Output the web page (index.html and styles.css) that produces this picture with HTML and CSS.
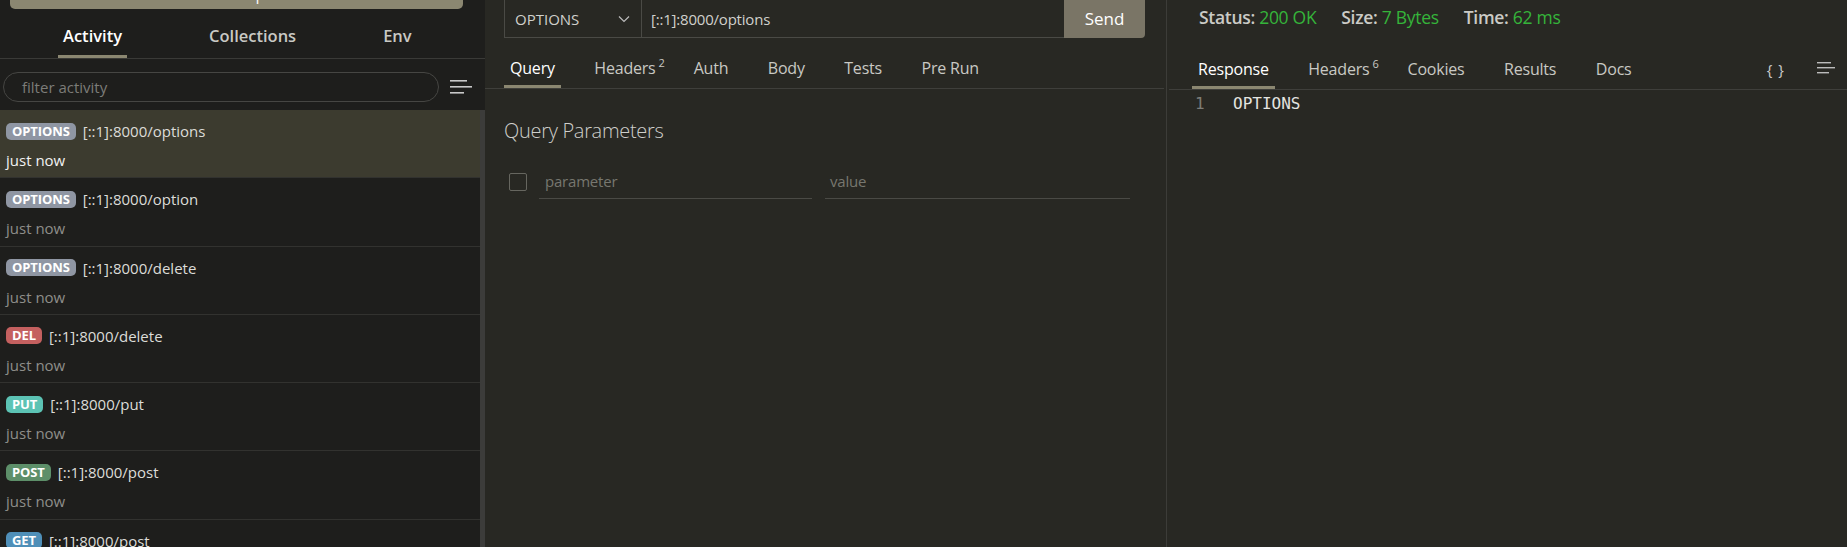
FILE: index.html
```html
<!DOCTYPE html>
<html>
<head>
<meta charset="utf-8">
<link rel="stylesheet" href="styles.css">
</head>
<body>
<div class="app">
  <aside class="sidebar">
    <div class="topbtn"><span>New Request</span></div>
    <nav class="stabs">
      <div class="stab active">Activity</div>
      <div class="stab">Collections</div>
      <div class="stab">Env</div>
    </nav>
    <div class="filter-row">
      <div class="filter">filter activity</div>
      <svg class="menu-icon" width="24" height="14" viewBox="0 0 24 14"><rect x="0" y="0" width="17" height="1.6" fill="#c8c8c8"/><rect x="0" y="6" width="22" height="1.6" fill="#c8c8c8"/><rect x="0" y="12" width="14" height="1.6" fill="#c8c8c8"/></svg>
    </div>
    <div class="list-wrap">
      <ul class="list">
        <li class="item selected"><div class="line"><span class="badge b-options">OPTIONS</span><span class="url">[::1]:8000/options</span></div><div class="when">just now</div></li>
        <li class="item"><div class="line"><span class="badge b-options">OPTIONS</span><span class="url">[::1]:8000/option</span></div><div class="when">just now</div></li>
        <li class="item"><div class="line"><span class="badge b-options">OPTIONS</span><span class="url">[::1]:8000/delete</span></div><div class="when">just now</div></li>
        <li class="item"><div class="line"><span class="badge b-del">DEL</span><span class="url">[::1]:8000/delete</span></div><div class="when">just now</div></li>
        <li class="item"><div class="line"><span class="badge b-put">PUT</span><span class="url">[::1]:8000/put</span></div><div class="when">just now</div></li>
        <li class="item"><div class="line"><span class="badge b-post">POST</span><span class="url">[::1]:8000/post</span></div><div class="when">just now</div></li>
        <li class="item"><div class="line"><span class="badge b-get">GET</span><span class="url">[::1]:8000/post</span></div><div class="when">just now</div></li>
      </ul>
      <div class="scrollbar"></div>
    </div>
  </aside>

  <main class="request">
    <div class="reqbar">
      <div class="method">OPTIONS
        <svg class="chev" width="12" height="8" viewBox="0 0 12 8"><path d="M1 1.5 L6 6.5 L11 1.5" fill="none" stroke="#bbb" stroke-width="1.2"/></svg>
      </div>
      <div class="urlbox">[::1]:8000/options</div>
      <button class="send">Send</button>
    </div>
    <nav class="tabs">
      <div class="tab active"><span>Query</span></div>
      <div class="tab t-sup"><span>Headers<sup>2</sup></span></div>
      <div class="tab"><span>Auth</span></div>
      <div class="tab"><span>Body</span></div>
      <div class="tab"><span>Tests</span></div>
      <div class="tab"><span>Pre Run</span></div>
    </nav>
    <h2 class="qp">Query Parameters</h2>
    <div class="param-row">
      <span class="check"></span>
      <div class="field f-param">parameter</div>
      <div class="field f-value">value</div>
    </div>
  </main>

  <div class="vdiv"></div>

  <section class="response">
    <div class="status">
      <span class="stat">Status: <b>200 OK</b></span>
      <span class="stat">Size: <b>7 Bytes</b></span>
      <span class="stat">Time: <b>62 ms</b></span>
    </div>
    <nav class="tabs rtabs">
      <div class="tab active"><span>Response</span></div>
      <div class="tab t-sup"><span>Headers<sup>6</sup></span></div>
      <div class="tab"><span>Cookies</span></div>
      <div class="tab"><span>Results</span></div>
      <div class="tab"><span>Docs</span></div>
      <div class="spacer"></div>
      <div class="braces">{ }</div>
      <svg class="rmenu" width="20" height="12" viewBox="0 0 20 12"><rect x="0" y="0" width="14" height="1.4" fill="#bbb"/><rect x="0" y="5" width="18" height="1.4" fill="#bbb"/><rect x="0" y="10" width="12" height="1.4" fill="#bbb"/></svg>
    </nav>
    <div class="code"><span class="ln">1</span><span class="src">OPTIONS</span></div>
  </section>
</div>
</body>
</html>
```
FILE: styles.css
```css
* { box-sizing: border-box; }
html, body { margin: 0; padding: 0; }
body {
  background: #282823;
  font-family: "Open Sans", "Noto Sans", sans-serif;
  color: #d4d4d4;
  width: 1847px;
  height: 547px;
  overflow: hidden;
}
.app { display: flex; height: 547px; }

/* sidebar */
.sidebar {
  width: 485px;
  flex: none;
  background: #1e1e1c;
  display: flex;
  flex-direction: column;
}
.topbtn {
  margin: 0 22px 0 10px;
  height: 9px;
  background: #8b8771;
  border-radius: 0 0 5px 5px;
  overflow: hidden;
  display: flex;
  justify-content: center;
  align-items: flex-end;
  flex: none;
}
.topbtn span {
  color: #fff;
  font-size: 15px;
  line-height: 15px;
  margin-bottom: 7.5px;
  padding-left: 14px;
}
.stabs {
  display: flex;
  height: 50px;
  padding-left: 58px;
  gap: 77px;
  border-bottom: 1px solid #3a3a37;
  flex: none;
}
.stab {
  display: flex;
  align-items: center;
  padding: 7px 5px 0;
  font-size: 16.5px;
  font-weight: 600;
  color: #c9c9c4;
  border-bottom: 3px solid transparent;
}
.stab.active { color: #fff; border-bottom-color: #8b8771; }

.filter-row {
  display: flex;
  align-items: center;
  padding: 13px 0 8px 3px;
  gap: 11px;
  flex: none;
}
.filter {
  width: 436px;
  height: 30px;
  border: 1px solid #464643;
  border-radius: 15px;
  padding-left: 18px;
  font-size: 15px;
  line-height: 28px;
  color: #7c7c78;
}
.menu-icon { flex: none; }

.list-wrap { flex: 1; display: flex; min-height: 0; }
.list { list-style: none; margin: 0; padding: 0; flex: 1; overflow: hidden; }
.scrollbar { width: 5px; background: #3c3c3a; }
.item {
  height: 68.3px;
  border-bottom: 1px solid #32322f;
  padding: 12px 6px 0;
}
.item.selected { background: #3c3b2f; }
.line { display: flex; align-items: center; gap: 7px; height: 18px; }
.badge {
  height: 17px;
  padding: 0 6px;
  border-radius: 5px;
  font-size: 13px;
  font-weight: 700;
  color: #fff;
  line-height: 17px;
  letter-spacing: -0.1px;
}
.b-options { background: #8f96a3; }
.b-del { background: #c4605f; }
.b-put { background: #5cc3b4; }
.b-post { background: #5d8f69; }
.b-get { background: #4f8fb8; }
.url { font-size: 15px; color: #dcdcd8; }
.when {
  margin-top: 10px;
  font-size: 15px;
  color: #8e8e8a;
}
.item.selected .when { color: #f2f2f2; }

/* request */
.request {
  width: 681px;
  flex: none;
  padding: 0 0 0 19px;
}
.reqbar {
  display: flex;
  height: 39px;
  margin-top: -1px;
  width: 641px;
}
.method {
  width: 138px;
  border: 1px solid #4a4a45;
  display: flex;
  align-items: center;
  justify-content: space-between;
  padding: 0 11px 0 10px;
  font-size: 15px;
  color: #d0d0cc;
}
.urlbox {
  flex: 1;
  border-bottom: 1px solid #4a4a45;
  border-top: 1px solid #4a4a45;
  display: flex;
  align-items: center;
  padding-left: 9px;
  font-size: 15px;
  color: #d0d0cc;
  letter-spacing: -0.2px;
}
.send {
  width: 81px;
  border: none;
  background: #7a7566;
  color: #fff;
  font-family: inherit;
  font-size: 17px;
  border-radius: 0 0 4px 0;
  padding: 0;
}
.tabs {
  display: flex;
  height: 51px;
  border-bottom: 1px solid #3f3f3b;
  margin-left: -19px;
  padding-left: 19px;
  margin-right: 2px;
}
.tab {
  display: flex;
  align-items: center;
  padding: 13px 6px 0;
  margin-right: 27.5px;
  font-size: 16px;
  color: #c9c9c4;
  border-bottom: 3px solid transparent;
  letter-spacing: -0.2px;
}
.tab span { display: block; }
.tab sup { font-size: 11px; margin-left: 3px; line-height: 0; position: relative; top: -1px; }
.tab.active { color: #fff; border-bottom-color: #8b8771; }
.tabs .t-sup { margin-right: 17px; }
.qp {
  margin: 28px 0 0;
  font-size: 20px;
  font-weight: 300;
  color: #cfcfcb;
  letter-spacing: -0.3px;
}
.param-row {
  display: flex;
  align-items: flex-start;
  margin-top: 27px;
}
.check {
  width: 18px;
  height: 18px;
  border: 1px solid #66665f;
  border-radius: 2px;
  margin-left: 5px;
  margin-right: 12px;
  margin-top: 2px;
}
.field {
  height: 28px;
  border-bottom: 1px solid #4a4a45;
  font-size: 15px;
  color: #77776f;
  padding: 0 0 0 6px;
  line-height: 20px;
  letter-spacing: -0.2px;
}
.f-param { width: 273px; margin-right: 13px; }
.f-value { width: 305px; padding-left: 5px; }

.vdiv { width: 1px; background: #3c3c38; flex: none; }

/* response */
.response { flex: 1; padding-left: 2px; }
.status {
  display: flex;
  gap: 25px;
  padding: 5px 0 0 30px;
  height: 39px;
  font-size: 17.5px;
}
.stat { color: #cbcbc6; font-weight: 600; letter-spacing: -0.3px; }
.stat b { color: #35b43a; font-weight: 500; }
.rtabs { margin-left: 0; padding-left: 23px; margin-right: 0; }
.spacer { flex: 1; }
.braces { font-size: 15px; color: #ccc; padding-top: 10px; display: flex; align-items: center; margin-right: 32px; letter-spacing: 1px; }
.rmenu { align-self: center; margin-top: 8px; margin-right: 10px; }
.code {
  display: flex;
  padding: 4px 0 0 26px;
  font-family: "DejaVu Sans Mono", "Liberation Mono", monospace;
  font-size: 16px;
}
.ln { color: #7d7d78; width: 38px; }
.src { color: #e4e4e0; }
```
